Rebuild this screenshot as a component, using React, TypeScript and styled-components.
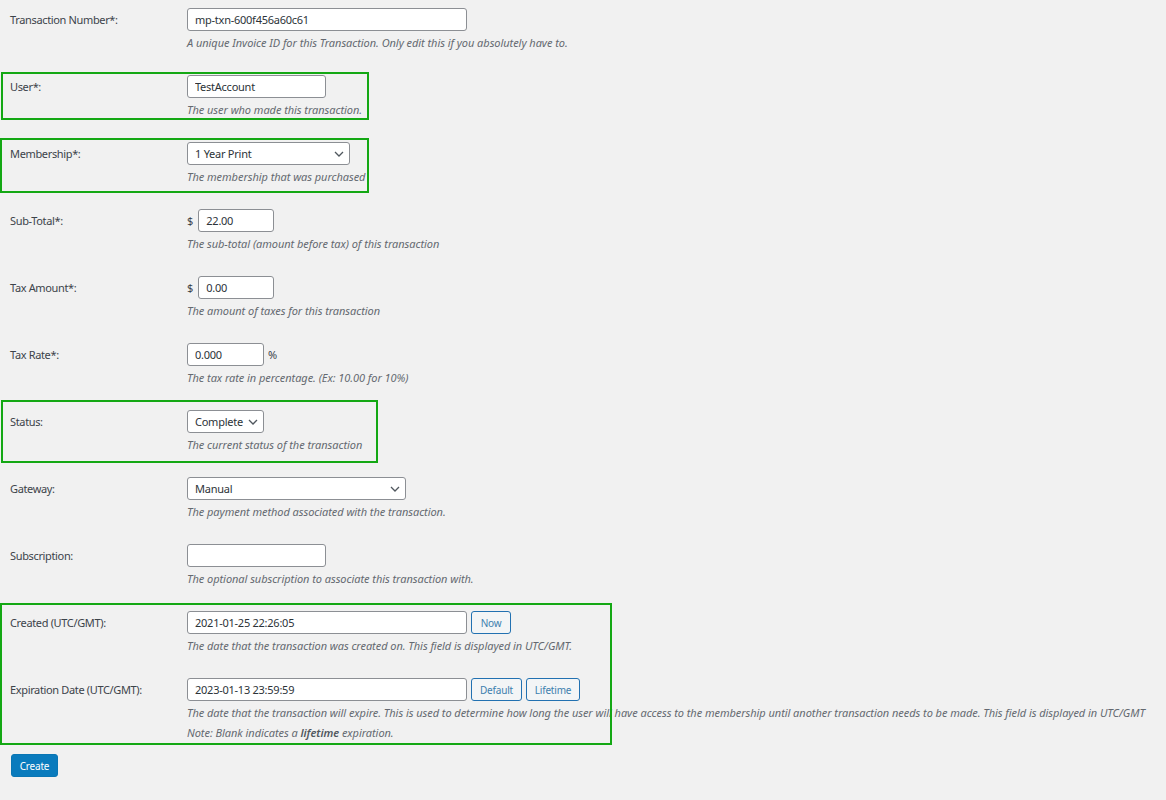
import * as React from "react";
import styled, { createGlobalStyle } from "styled-components";

const GlobalStyle = createGlobalStyle`
  html, body {
    margin: 0;
    padding: 0;
    background: #f1f1f1;
  }
  body {
    font-family: "Noto Sans", "Open Sans", sans-serif;
    font-size: 11px;
    color: #2c3338;
  }
`;

interface FieldProps {
  label: string;
  last?: boolean;
  children: React.ReactNode;
}

const Field = ({ label, last, children }: FieldProps) => (
  <Row $last={last}>
    <Label>{label}</Label>
    <Cell>{children}</Cell>
  </Row>
);

interface SelectProps {
  value: string;
  width: number;
}

const Dropdown = ({ value, width }: SelectProps) => (
  <SelectWrap $width={width}>
    <Select defaultValue={value}>
      <option>{value}</option>
    </Select>
    <Chevron viewBox="0 0 10 6" width="10" height="6">
      <path d="M1 1l4 4 4-4" fill="none" stroke="#50575e" strokeWidth="1.3" />
    </Chevron>
  </SelectWrap>
);

const highlights = [
  { top: 72, left: 1, width: 368, height: 48 },
  { top: 138, left: 0, width: 369, height: 55 },
  { top: 400, left: 1, width: 377, height: 63 },
  { top: 603, left: 0, width: 612, height: 142 },
];

export default function App() {
  return (
    <Page>
      <GlobalStyle />
      <Table>
        <Field label="Transaction Number*:">
          <Input $width={280} defaultValue="mp-txn-600f456a60c61" />
          <Description>
            A unique Invoice ID for this Transaction. Only edit this if you
            absolutely have to.
          </Description>
        </Field>
        <Field label="User*:">
          <Input $width={139} defaultValue="TestAccount" />
          <Description>The user who made this transaction.</Description>
        </Field>
        <Field label="Membership*:">
          <Dropdown value="1 Year Print" width={163} />
          <Description>The membership that was purchased</Description>
        </Field>
        <Field label="Sub-Total*:">
          <Inline>
            <Unit>$</Unit>
            <Input $width={76} defaultValue="22.00" />
          </Inline>
          <Description>
            The sub-total (amount before tax) of this transaction
          </Description>
        </Field>
        <Field label="Tax Amount*:">
          <Inline>
            <Unit>$</Unit>
            <Input $width={76} defaultValue="0.00" />
          </Inline>
          <Description>The amount of taxes for this transaction</Description>
        </Field>
        <Field label="Tax Rate*:">
          <Inline>
            <Input $width={77} defaultValue="0.000" />
            <Unit>%</Unit>
          </Inline>
          <Description>
            The tax rate in percentage. (Ex: 10.00 for 10%)
          </Description>
        </Field>
        <Field label="Status:">
          <Dropdown value="Complete" width={77} />
          <Description>The current status of the transaction</Description>
        </Field>
        <Field label="Gateway:">
          <Dropdown value="Manual" width={219} />
          <Description>
            The payment method associated with the transaction.
          </Description>
        </Field>
        <Field label="Subscription:">
          <Input $width={139} defaultValue="" />
          <Description>
            The optional subscription to associate this transaction with.
          </Description>
        </Field>
        <Field label="Created (UTC/GMT):">
          <Inline>
            <Input $width={280} defaultValue="2021-01-25 22:26:05" />
            <SecondaryButton $width={40}>Now</SecondaryButton>
          </Inline>
          <Description>
            The date that the transaction was created on. This field is
            displayed in UTC/GMT.
          </Description>
        </Field>
        <Field label="Expiration Date (UTC/GMT):" last>
          <Inline>
            <Input $width={280} defaultValue="2023-01-13 23:59:59" />
            <SecondaryButton $width={51}>Default</SecondaryButton>
            <SecondaryButton $width={54}>Lifetime</SecondaryButton>
          </Inline>
          <Description $nowrap>
            The date that the transaction will expire. This is used to
            determine how long the user will have access to the membership
            until another transaction needs to be made. This field is displayed
            in UTC/GMT
          </Description>
          <Description $gap={4}>
            Note: Blank indicates a <strong>lifetime</strong> expiration.
          </Description>
        </Field>
      </Table>
      <Footer>
        <PrimaryButton>Create</PrimaryButton>
      </Footer>
      {highlights.map((h, i) => (
        <Highlight
          key={i}
          style={{ top: h.top, left: h.left, width: h.width, height: h.height }}
        />
      ))}
    </Page>
  );
}

const Page = styled.div`
  position: relative;
  width: 1166px;
  height: 800px;
  overflow: hidden;
`;

const Table = styled.div`
  display: flex;
  flex-direction: column;
`;

const Row = styled.div<{ $last?: boolean }>`
  display: grid;
  grid-template-columns: 177px 1fr;
  padding: 8px 0 ${(p) => (p.$last ? "13px" : "16px")} 10px;
`;

const Label = styled.div`
  height: 23px;
  display: flex;
  align-items: center;
  color: #3c434a;
  letter-spacing: -0.35px;
  white-space: nowrap;
`;

const Cell = styled.div`
  display: flex;
  flex-direction: column;
  align-items: flex-start;
  min-width: 0;
`;

const Inline = styled.div`
  display: flex;
  align-items: center;
  gap: 4px;
`;

const Unit = styled.span`
  color: #3c434a;
  padding-right: 1px;
`;

const Input = styled.input<{ $width: number }>`
  box-sizing: border-box;
  width: ${(p) => p.$width}px;
  height: 23px;
  padding: 0 7px;
  border: 1px solid #8c8f94;
  border-radius: 3px;
  background: #fff;
  font-family: "Noto Sans", "Open Sans", sans-serif;
  font-size: 11px;
  letter-spacing: -0.25px;
  color: #2c3338;
  outline: none;
`;

const SelectWrap = styled.div<{ $width: number }>`
  position: relative;
  width: ${(p) => p.$width}px;
  height: 23px;
`;

const Select = styled.select`
  box-sizing: border-box;
  width: 100%;
  height: 100%;
  padding: 0 14px 0 7px;
  border: 1px solid #8c8f94;
  border-radius: 3px;
  background: #fff;
  font-family: "Noto Sans", "Open Sans", sans-serif;
  font-size: 11px;
  letter-spacing: -0.25px;
  color: #2c3338;
  appearance: none;
  -webkit-appearance: none;
  outline: none;
`;

const Chevron = styled.svg`
  position: absolute;
  right: 6px;
  top: 9px;
  pointer-events: none;
`;

const Description = styled.p<{ $gap?: number; $nowrap?: boolean }>`
  margin: ${(p) => p.$gap ?? 4}px 0 0;
  line-height: 16px;
  font-style: italic;
  letter-spacing: -0.05px;
  color: #646970;
  white-space: ${(p) => (p.$nowrap ? "nowrap" : "normal")};
  strong {
    font-weight: 600;
    color: #50575e;
  }
`;

const SecondaryButton = styled.button<{ $width: number }>`
  box-sizing: border-box;
  width: ${(p) => p.$width}px;
  height: 23px;
  padding: 0;
  border: 1px solid #2271b1;
  border-radius: 3px;
  background: #f3f5f6;
  color: #3d7fae;
  font-family: "Noto Sans", "Open Sans", sans-serif;
  font-size: 10px;
  letter-spacing: -0.2px;
  cursor: pointer;
`;

const Footer = styled.div`
  padding-left: 11px;
`;

const PrimaryButton = styled.button`
  box-sizing: border-box;
  width: 47px;
  height: 23px;
  padding: 0;
  border: 1px solid #0a76b4;
  border-radius: 3px;
  background: #0a7bbd;
  color: #fff;
  font-family: "Noto Sans", "Open Sans", sans-serif;
  font-size: 10px;
  letter-spacing: -0.2px;
  cursor: pointer;
`;

const Highlight = styled.div`
  position: absolute;
  box-sizing: border-box;
  border: 2px solid #14a814;
  pointer-events: none;
`;
